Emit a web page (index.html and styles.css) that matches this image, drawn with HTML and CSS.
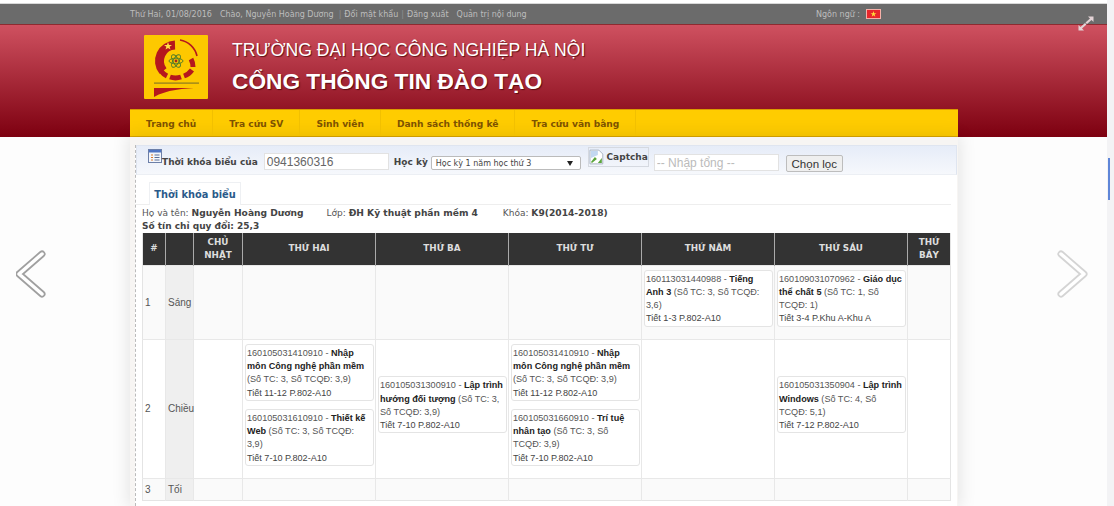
FILE: index.html
```html
<!DOCTYPE html>
<html lang="vi">
<head>
  <meta charset="UTF-8">
  <title>Cổng thông tin đào tạo</title>
  <link rel="stylesheet" href="styles.css">
</head>
<body>
  <div class="page">
    <div class="top-strip"></div>

    <div class="top-bar">
      <div class="top-left">
        <span class="top-date">Thứ Hai, 01/08/2016</span>
        <span class="top-name">Chào, Nguyễn Hoàng Dương</span>
        <span class="sep">|</span>
        <span>Đổi mật khẩu</span>
        <span class="sep">|</span>
        <span>Đăng xuất</span>
        <span class="top-admin">Quản trị nội dung</span>
      </div>
      <div class="top-lang">
        <span>Ngôn ngữ :</span>
        <svg class="flag" width="15" height="10" viewBox="0 0 15 10">
          <rect x="0.5" y="0.5" width="14" height="9" fill="#e8262b" stroke="#f6b0a8"/>
          <polygon points="7.5,2 8.2,4.2 10.4,4.2 8.6,5.5 9.3,7.7 7.5,6.3 5.7,7.7 6.4,5.5 4.6,4.2 6.8,4.2" fill="#ffdf3a"/>
        </svg>
      </div>
    </div>

    <header class="banner">
      <div class="brand">
        <svg class="logo" width="64" height="64" viewBox="0 0 64 64">
          <rect width="64" height="64" rx="1" fill="#fdc800"/>
          <g fill="none" stroke="#b5171d">
            <path d="M19 36 A16 16 0 0 1 31 10" stroke-width="9"/>
            <path d="M36 5 A21 21 0 0 1 53 21" stroke-width="1.6"/>
            <path d="M47 24 A17 17 0 0 1 49 32" stroke-width="5"/>
            <path d="M48 35 A17 17 0 0 1 40 41" stroke-width="5"/>
            <path d="M37 42 A17 17 0 0 1 26 42" stroke-width="5"/>
            <path d="M23 41 A17 17 0 0 1 17 36" stroke-width="5"/>
          </g>
          <polygon points="24,7 25,10 28,10 25.6,11.800 26.500,14.600 24,13 21.500,14.600 22.400,11.800 20,10 23,10" fill="#ffe14a"/>
          <g fill="none" stroke="#4d7a2a" stroke-width="0.9">
            <ellipse cx="32" cy="26" rx="7" ry="2.8"/>
            <ellipse cx="32" cy="26" rx="7" ry="2.8" transform="rotate(60 32 26)"/>
            <ellipse cx="32" cy="26" rx="7" ry="2.8" transform="rotate(120 32 26)"/>
          </g>
          <circle cx="32" cy="26" r="1.4" fill="#a3281e"/>
          <rect x="10" y="47.500" width="45" height="1.200" fill="#8a7a20"/>
          <path d="M10 53 H56 C40 53 22 55 10 62 Z" fill="#b5171d"/>
        </svg>
        <div class="brand-text">
          <div class="brand-school">TRƯỜNG ĐẠI HỌC CÔNG NGHIỆP HÀ NỘI</div>
          <div class="brand-portal">CỔNG THÔNG TIN ĐÀO TẠO</div>
        </div>
      </div>
      <nav class="nav">
        <a class="nav-item">Trang chủ</a>
        <a class="nav-item">Tra cứu SV</a>
        <a class="nav-item">Sinh viên</a>
        <a class="nav-item">Danh sách thống kê</a>
        <a class="nav-item">Tra cứu văn bằng</a>
      </nav>
    </header>

    <main class="content">
      <div class="card">
        <form class="filter">
          <svg class="filter-icon" width="14" height="14" viewBox="0 0 14 14">
            <rect x="0.5" y="0.5" width="13" height="13" fill="#f4f6fb" stroke="#6c7fa8"/>
            <rect x="1" y="1" width="12" height="2.5" fill="#4f74c4"/>
            <path d="M3 6H5M3 8.500H5M3 11H5" stroke="#d9782a"/>
            <path d="M6.500 6H11.500M6.500 8.500H11.500M6.500 11H11.500" stroke="#5a6f99"/>
          </svg>
          <label class="filter-label">Thời khóa biểu của</label>
          <input class="field field-code" type="text" value="0941360316">
          <label class="filter-label filter-label-term">Học kỳ</label>
          <div class="term-select">
            <span>Học kỳ 1 năm học thứ 3</span>
            <span class="term-arrow"></span>
          </div>
          <div class="captcha">
            <svg width="16" height="16" viewBox="0 0 16 16">
              <path d="M1 1H10L14 5V15H1Z" fill="#fff" stroke="#a9b4c4"/>
              <path d="M2 13L6 8L8 10L3 14Z" fill="#5aa53c"/>
              <path d="M2 2H9V6L2 9Z" fill="#c3d8f2"/>
              <path d="M9 14L13 9V14Z" fill="#5aa53c"/>
            </svg>
            <span>Captcha</span>
          </div>
          <input class="field field-sum" type="text" placeholder="-- Nhập tổng --">
          <button class="filter-btn" type="button">Chọn lọc</button>
        </form>

        <div class="tabs">
          <div class="tab">Thời khóa biểu</div>
        </div>

        <div class="student">
          <div class="student-row">
            <span class="student-name">Họ và tên: <b>Nguyễn Hoàng Dương</b></span>
            <span class="student-class">Lớp: <b>ĐH Kỹ thuật phần mềm 4</b></span>
            <span>Khóa: <b>K9(2014-2018)</b></span>
          </div>
          <div class="student-total">Số tín chỉ quy đổi: 25,3</div>
        </div>

        <table class="schedule">
          <colgroup>
            <col class="c-num"><col class="c-session"><col class="c-sun">
            <col class="c-day"><col class="c-day"><col class="c-day">
            <col class="c-day"><col class="c-day"><col class="c-sat">
          </colgroup>
          <thead>
            <tr>
              <th>#</th><th></th><th>CHỦ<br>NHẬT</th>
              <th>THỨ HAI</th><th>THỨ BA</th><th>THỨ TƯ</th>
              <th>THỨ NĂM</th><th>THỨ SÁU</th><th>THỨ<br>BẢY</th>
            </tr>
          </thead>
          <tbody>
            <tr class="row-morning">
              <td>1</td><td class="session">Sáng</td><td></td><td></td><td></td><td></td>
              <td>
                <div class="lesson">160113031440988 - <b>Tiếng Anh 3</b> (Số TC: 3, Số TCQĐ: 3,6)<br><span class="lesson-time">Tiết 1-3 P.802-A10</span></div>
              </td>
              <td>
                <div class="lesson">160109031070962 - <b>Giáo dục thể chất 5</b> (Số TC: 1, Số TCQĐ: 1)<br><span class="lesson-time">Tiết 3-4 P.Khu A-Khu A</span></div>
              </td>
              <td></td>
            </tr>
            <tr class="row-afternoon">
              <td>2</td><td class="session">Chiều</td><td></td>
              <td>
                <div class="lesson">160105031410910 - <b>Nhập môn Công nghệ phần mềm</b> (Số TC: 3, Số TCQĐ: 3,9)<br><span class="lesson-time">Tiết 11-12 P.802-A10</span></div>
                <div class="lesson">160105031610910 - <b>Thiết kế Web</b> (Số TC: 3, Số TCQĐ: 3,9)<br><span class="lesson-time">Tiết 7-10 P.802-A10</span></div>
              </td>
              <td>
                <div class="lesson">160105031300910 - <b>Lập trình hướng đối tượng</b> (Số TC: 3, Số TCQĐ: 3,9)<br><span class="lesson-time">Tiết 7-10 P.802-A10</span></div>
              </td>
              <td>
                <div class="lesson">160105031410910 - <b>Nhập môn Công nghệ phần mềm</b> (Số TC: 3, Số TCQĐ: 3,9)<br><span class="lesson-time">Tiết 11-12 P.802-A10</span></div>
                <div class="lesson">160105031660910 - <b>Trí tuệ nhân tạo</b> (Số TC: 3, Số TCQĐ: 3,9)<br><span class="lesson-time">Tiết 7-10 P.802-A10</span></div>
              </td>
              <td></td>
              <td>
                <div class="lesson">160105031350904 - <b>Lập trình Windows</b> (Số TC: 4, Số TCQĐ: 5,1)<br><span class="lesson-time">Tiết 7-12 P.802-A10</span></div>
              </td>
              <td></td>
            </tr>
            <tr class="row-evening">
              <td>3</td><td class="session">Tối</td><td></td><td></td><td></td><td></td><td></td><td></td><td></td>
            </tr>
          </tbody>
        </table>
      </div>
    </main>

    <svg class="expand" width="16" height="15" viewBox="0 0 16 15">
      <path d="M10 0.500H15.500V6L13.500 4L9 8L7.500 6.500L12 2.500Z" fill="#e3d3d6"/>
      <path d="M0.500 14.500V9L2.500 11L7 7L8.500 8.500L4 12.500L6 14.500Z" fill="#e3d3d6"/>
    </svg>

    <svg class="slide-arrow slide-prev" width="32" height="52" viewBox="0 0 32 52">
      <path d="M26 6L3 26L26 46" fill="none" stroke="#a0a0a0" stroke-width="7" stroke-linecap="round" stroke-linejoin="round"/>
      <path d="M26 6L3 26L26 46" fill="none" stroke="#fff" stroke-width="3.500" stroke-linecap="round" stroke-linejoin="round"/>
    </svg>
    <svg class="slide-arrow slide-next" width="32" height="52" viewBox="0 0 32 52">
      <path d="M4 6L27 26L4 46" fill="none" stroke="#d4d4d4" stroke-width="7" stroke-linecap="round" stroke-linejoin="round"/>
      <path d="M4 6L27 26L4 46" fill="none" stroke="#fff" stroke-width="3.500" stroke-linecap="round" stroke-linejoin="round"/>
    </svg>
  </div>

  <div class="scrollbar"><div class="scroll-thumb"></div></div>
</body>
</html>
```

FILE: styles.css
```css
html, body {
  height: 100%;
}

body {
  margin: 0;
  height: 506px;
  overflow: hidden;
  display: flex;
  background-color: #fdfdfd;
  font-family: "Liberation Sans", Arial, sans-serif;
  color: #555;
}

.page {
  position: relative;
  width: 1107px;
  height: 506px;
  overflow: hidden;
}

.scrollbar {
  width: 7px;
  padding-top: 158px;
  background-color: #f3f3f5;
  box-sizing: border-box;
}

.scroll-thumb {
  width: 2px;
  height: 42px;
  margin-left: 1px;
  background-color: #5f86d8;
}

.top-strip {
  height: 3px;
  background-color: #fff;
  border-bottom: 1px solid #d8d8d8;
}

/* barra cinza */
.top-bar {
  height: 20px;
  padding-left: 130px;
  display: flex;
  align-items: center;
  background-color: #6b6b6b;
  color: #bdbdbd;
  font-family: "DejaVu Sans", sans-serif;
  font-size: 8px;
}

.top-left {
  width: 686px;
  display: flex;
  gap: 3px;
}

.top-date {
  margin-right: 5px;
}

.top-name {
  margin-right: 2px;
}

.top-admin {
  margin-left: 5px;
}

.sep {
  color: #8f8f8f;
}

.top-lang {
  display: flex;
  align-items: center;
  gap: 6px;
}

.banner {
  height: 113px;
  padding-left: 130px;
  background: linear-gradient(to bottom, #cf5160, #7d0010);
  border-top: 1px solid #8d2b30;
  box-sizing: border-box;
}

.brand {
  height: 84px;
  padding: 10px 0 0 14px;
  box-sizing: border-box;
  display: flex;
  gap: 24px;
}

.brand-text {
  color: #fff;
  text-shadow: 1px 1px 1px rgba(60, 0, 0, 0.7);
}

.brand-school {
  margin-top: 3px;
  font-size: 17.600px;
  line-height: 24px;
}

.brand-portal {
  margin-top: 4px;
  font-size: 22.700px;
  line-height: 30px;
  font-weight: bold;
}

.nav {
  width: 828px;
  height: 28px;
  display: flex;
  background-color: #ffcc00;
  border-top: 1px solid #d99a00;
  border-bottom: 1px solid #d9a400;
  box-sizing: border-box;
}

.nav-item {
  padding: 0 16px;
  line-height: 28px;
  font-family: "DejaVu Sans", sans-serif;
  font-size: 9.100px;
  font-weight: bold;
  color: #7d5200;
  border-right: 1px solid #f2c000;
}

.content {
  width: 828px;
  height: 369px;
  margin-left: 130px;
  padding: 8px 1px 0 5px;
  box-sizing: border-box;
  background-color: #f7f5f3;
  box-shadow: 0 0 16px 2px rgba(0, 0, 0, 0.1);
}

.card {
  height: 361px;
  padding-right: 6px;
  background-color: #fff;
  border-left: 1px dashed #bbb;
}

.filter {
  height: 30px;
  margin-right: -6px;
  display: flex;
  align-items: flex-start;
  background: linear-gradient(to bottom, #e6ecf8, #f6f8fc);
  border: 1px solid #dfe5f0;
  border-bottom-color: #eceff4;
  box-sizing: border-box;
}

.filter-icon {
  margin: 3px 0 0 11px;
}

.filter-label {
  margin-top: 11px;
  font-family: "DejaVu Sans", sans-serif;
  font-size: 9px;
  font-weight: bold;
  color: #444;
}

.filter-label-term {
  margin-left: 5px;
}

.field {
  height: 17px;
  padding: 0 2px;
  border: 1px solid #e2e2e2;
  box-sizing: border-box;
  font-family: "Liberation Sans", Arial, sans-serif;
  font-size: 12px;
  color: #666;
  background-color: #fff;
}

.field::placeholder {
  color: #bbb;
}

.field-code {
  width: 125px;
  margin: 7px 0 0 6px;
}

.field-sum {
  width: 125px;
  margin: 8px 0 0 5px;
}

.term-select {
  width: 150px;
  height: 14px;
  margin: 10px 0 0 3px;
  padding: 0 4px;
  display: flex;
  align-items: center;
  justify-content: space-between;
  box-sizing: border-box;
  background-color: #fff;
  border: 1px solid #bbb;
  border-radius: 2px;
  font-family: "DejaVu Sans", sans-serif;
  font-size: 8px;
  color: #444;
}

.term-arrow {
  border-top: 5px solid #222;
  border-left: 3px solid transparent;
  border-right: 3px solid transparent;
  margin-right: 3px;
}

.captcha {
  width: 61px;
  height: 20px;
  margin: 1px 0 0 7px;
  display: flex;
  align-items: center;
  gap: 2px;
  box-sizing: border-box;
  border: 1px solid #d5d9e0;
  font-family: "DejaVu Sans", sans-serif;
  font-size: 9px;
  font-weight: bold;
  color: #444;
  white-space: nowrap;
}

.filter-btn {
  width: 57px;
  height: 17px;
  margin: 9px 0 0 7px;
  padding: 0;
  background-color: #efefef;
  border: 1px solid #bdbdbd;
  border-radius: 2px;
  font-family: "Liberation Sans", Arial, sans-serif;
  font-size: 11.500px;
  color: #333;
}

.tabs {
  height: 30px;
  padding: 7px 0 0 13px;
  box-sizing: border-box;
  border-bottom: 1px solid #eee;
}

.tab {
  width: 92px;
  height: 23px;
  line-height: 23px;
  text-align: center;
  background-color: #fff;
  border: 1px solid #eef0f3;
  border-bottom: none;
  box-sizing: border-box;
  font-family: "DejaVu Sans", sans-serif;
  font-size: 9.800px;
  font-weight: bold;
  color: #2a5a8a;
}

.student {
  margin: 2px 0 0 6px;
  height: 26px;
  font-family: "DejaVu Sans", sans-serif;
  font-size: 9px;
  line-height: 13px;
}

.student b {
  font-size: 9.150px;
  color: #444;
}

.student-total {
  font-weight: bold;
  color: #444;
}

.student-name {
  margin-right: 20px;
}

.student-class {
  margin-right: 22px;
}

.schedule {
  width: 809px;
  margin-left: 6px;
  table-layout: fixed;
  border-collapse: collapse;
  border-bottom: 1px solid #e4e4e4;
  border-left: 1px solid #e4e4e4;
  border-right: 1px solid #e4e4e4;
}

.c-num { width: 23px; }
.c-session { width: 28px; }
.c-sun { width: 49px; }
.c-day { width: 133px; }
.c-sat { width: 43px; }

.schedule thead tr {
  height: 32px;
}

.schedule th {
  padding: 0;
  background-color: #333;
  color: #ddd;
  border-left: 1px solid #aaa;
  font-family: "DejaVu Sans", sans-serif;
  font-size: 8.800px;
  line-height: 13px;
}

.schedule th:first-child {
  border-left: none;
}

.schedule td {
  padding: 4px 1px 4px 2px;
  vertical-align: middle;
  border-left: 1px solid #e8e8e8;
  border-top: 1px solid #e8e8e8;
  font-size: 10px;
}

.schedule td:first-child {
  border-left: none;
}

.row-morning { height: 74px; background-color: #fafafa; }
.row-afternoon { height: 139px; }
.row-evening { height: 22px; background-color: #fafafa; }

.schedule td.session {
  background-color: #efefef;
  padding-left: 2px;
}

.lesson {
  margin-bottom: 8px;
  padding: 2px 1px 0;
  background-color: #fff;
  border: 1px solid #e4e4e4;
  border-radius: 3px;
  font-size: 9.100px;
  line-height: 13.300px;
  color: #555;
}

.lesson b {
  color: #222;
}

.lesson-time {
  color: #444;
}

.expand {
  position: absolute;
  left: 1078px;
  top: 16px;
}

.slide-arrow {
  position: absolute;
  top: 248px;
}

.slide-prev {
  left: 16px;
}

.slide-next {
  left: 1057px;
}
```
